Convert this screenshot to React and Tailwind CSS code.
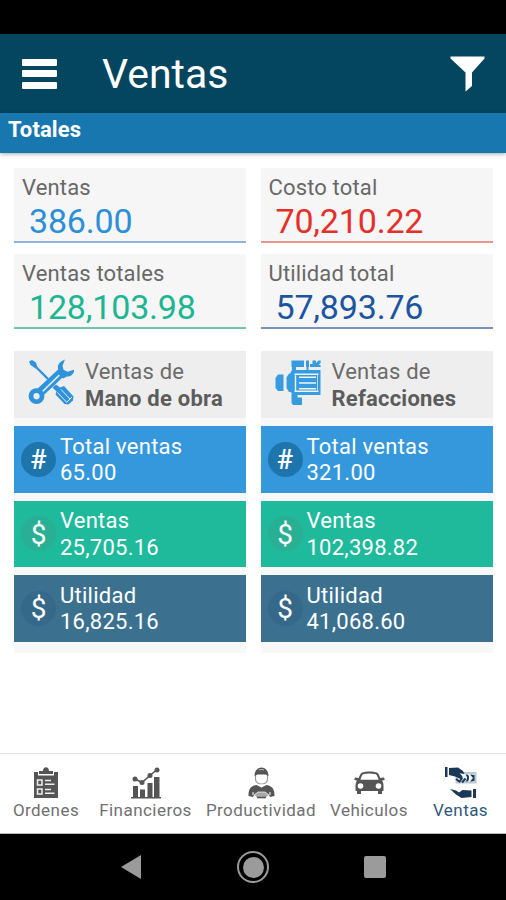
const totals = [
  { label: 'Ventas', value: '386.00', color: 'text-[#2d8fd8]', line: 'border-[#8fb4e4]' },
  { label: 'Costo total', value: '70,210.22', color: 'text-[#e5302a]', line: 'border-[#ef9390]' },
  { label: 'Ventas totales', value: '128,103.98', color: 'text-[#1db592]', line: 'border-[#74c7a6]' },
  { label: 'Utilidad total', value: '57,893.76', color: 'text-[#1c559f]', line: 'border-[#7d90bd]' },
];

function ToolsIcon() {
  return (
    <svg width="46" height="47" viewBox="0 0 46 47" fill="none">
      <path d="M1 2.500 4 1l4 2.500 1.500 5-2 1-5-3.500z" fill="#2f93dc" />
      <path d="M7 7 20 20" stroke="#2f93dc" strokeWidth="2.400" />
      <path d="m24.500 28.500 3.500-3 4 3 4-1.500 9.500 10.500-.5 4-4.500 4-4-.5-9-9.500 1-3z" fill="#2f93dc" />
      <path d="m33 30.500 9 9.500M29.500 33.500l9 9.500M38.500 43.500l5.500-5.500" stroke="#e6eff6" strokeWidth="1" />
      <path d="M12 33.500 35.500 11.500" stroke="#2f93dc" strokeWidth="9" />
      <path d="M14.500 32.500 34.500 13" stroke="#e5eff7" strokeWidth="1.700" />
      <path d="M37 .5c-5.500 2-8.500 6-6.500 10.500L29 14l6 5.500 4-2c3.500.5 7-2.500 7.500-7l-7 2.200-4-2-1-4z" fill="#2f93dc" />
      <circle cx="8.500" cy="37.200" r="5.500" fill="#eee" stroke="#2f93dc" strokeWidth="4.800" />
    </svg>
  );
}

function EngineIcon() {
  return (
    <svg width="47" height="47" viewBox="0 0 47 47" fill="#369cdf">
      <path d="M3 15.500h5.500V32H3L.5 29V19zM14 14.500h2.500V33H14l-2.500-4V18.500z" />
      <path d="M16.500 1.500H29V8H16.500zM31 1.500h3V8h-3zM35 5h2.500V1.500H41V4l2.500-2.500h2.200V4l-2 1.500 2 1V8H35z" />
      <path d="M17 7.500h4V12h-4zM31.500 7.500h2V12h-2zM17 11h28.500v25H18l-2.500-3V13.500z" />
      <path d="M16.500 35h6v3.500H27V46H18l-1.500-2z" />
      <path d="M20.500 16.200v15.300M24 18.200h17M24 24h17M24 29.800h17M19.500 15.300h24M19.500 32.200h24" fill="none" stroke="#eef4f9" strokeWidth="1.400" />
      <path d="M42.500 16v15.500" fill="none" stroke="#b9dbf2" strokeWidth="1" />
    </svg>
  );
}

const groups = [
  { name: 'Mano de obra', Icon: ToolsIcon, values: ['65.00', '25,705.16', '16,825.16'] },
  { name: 'Refacciones', Icon: EngineIcon, values: ['321.00', '102,398.82', '41,068.60'] },
];

const tiles = [
  { label: 'Total ventas', sign: '#', bg: 'bg-[#3598dc]', disc: 'bg-[#1d75ac]', signClass: 'text-[27px] font-medium' },
  { label: 'Ventas', sign: '$', bg: 'bg-[#1fba9b]', disc: 'bg-[#29b094]', signClass: 'text-[28px]' },
  { label: 'Utilidad', sign: '$', bg: 'bg-[#3b718f]', disc: 'bg-[#366989]', signClass: 'text-[28px]' },
];

function Group({ name, Icon, values }) {
  return (
    <section className="flex h-[302px] w-[232px] flex-col gap-2 bg-[#f8f8f8]">
      <div className="flex h-[67px] bg-[#eee] pl-[14px] pt-[8px]">
        <div className="w-[57px] shrink-0">
          <Icon />
        </div>
        <div className="whitespace-nowrap text-[22px] leading-[26.500px] text-[#6b6b6b]">
          <div className="tracking-[0.200px]">Ventas de</div>
          <div className="font-bold tracking-[0.220px] text-[#5c5c5c]">{name}</div>
        </div>
      </div>
      {tiles.map((t, i) => (
        <div key={t.label} className={`flex h-[66.500px] items-center pl-[7px] text-white ${t.bg}`}>
          <div className={`flex h-[35px] w-[35px] items-center justify-center rounded-full pt-[2px] leading-none ${t.disc} ${t.signClass}`}>
            {t.sign}
          </div>
          <div className="ml-[4px] pt-[2px] text-[22px] leading-[26.500px] tracking-[0.250px]">
            <div>{t.label}</div>
            <div>{values[i]}</div>
          </div>
        </div>
      ))}
    </section>
  );
}

const OrdersIcon = () => (
  <svg width="26" height="32" viewBox="0 0 26 32" fill="#555">
    <path d="M1 5h4v3.500h16V5h4v26H1z" />
    <path d="M6 7V4h4c0-5 6-5 6 0h4v3z" />
    <g fill="none" stroke="#eee">
      <path d="M4.500 13h4.500v5H4.500zM4.500 22h4.500v5H4.500z" strokeWidth="1.500" />
      <path d="M12 13.500h6M12 17.200h9.500M12 22.500h6M12 26.200h9.500" strokeWidth="1.500" />
    </g>
  </svg>
);

const ChartIcon = () => (
  <svg width="30" height="32" viewBox="0 0 30 32" fill="#555">
    <path d="M2 19h5v11H2zM9 22.500h5V30H9zM16.500 16h5v14h-5zM23 10h5.500v20H23zM0 30h30v1.500H0z" />
    <path d="m4 12 7 3.500 8-7 7-6" fill="none" stroke="#555" strokeWidth="1.600" />
    <circle cx="4" cy="12" r="2.500" />
    <circle cx="11" cy="15.500" r="2.500" />
    <circle cx="19" cy="8.500" r="2.500" />
    <circle cx="26" cy="3" r="2.500" />
  </svg>
);

const WorkerIcon = () => (
  <svg width="27" height="32" viewBox="0 0 27 32" fill="#555">
    <path d="M7.500 8v4.500c1 6 11 6 12 0V8" fill="#fff" stroke="#999" strokeWidth="1.200" />
    <path d="M6.500 9C6.500-2.500 20.500-2.500 20.500 9l-3-1.500h-8z" />
    <path d="M11 3c2-.7 3-.7 5 0" stroke="#ccc" strokeWidth="1" fill="none" />
    <path d="m8.500 18 5 2.500 5-2.500c6 1.200 8 4 8 11l-4.500 1-1-2-3 1.500H9L6 28l-1 2-4.500-1c0-7 2-9.800 8-11z" />
    <path d="m10 17.500 3.500 3 3.500-3" fill="#fff" />
    <path d="M5 25v3M22 25v3" stroke="#fff" strokeWidth="1" fill="none" />
    <path d="m6 28 4-3h7l4 3-4 3.500h-7z" fill="#a8a8a8" stroke="#fff" strokeWidth=".7" />
    <path d="M9 30.500h9" stroke="#555" strokeWidth="1.500" />
  </svg>
);

const CarIcon = () => (
  <svg width="31" height="24" viewBox="0 0 31 24" fill="#555">
    <path fillRule="evenodd" d="M8 1.500c4-1.500 11-1.500 15 0 1.500 1 2.500 3 3.200 5.500l3.800-.5.800 2.200-2.800 1c1 1.200 1.500 3 1.500 5V20h-1.500v3h-4v-3H7v3H3v-3H1.500v-5.300c0-2 .5-3.800 1.500-5l-2.800-1L1 6.500l3.800.5C5.500 4.500 6.500 2.500 8 1.500zM9 3.300C7.800 4.600 7 6.500 6.500 8.800h18C24 6.500 23.200 4.600 22 3.300c-4-1-9-1-13 0z" />
    <circle cx="6.500" cy="15" r="2.800" fill="#fff" />
    <circle cx="24.500" cy="15" r="2.800" fill="#fff" />
  </svg>
);

const SalesIcon = () => (
  <svg width="32" height="32" viewBox="0 0 32 32" fill="#1b3858">
    <path d="M10.500 5h21v11.500h-21z" fill="#b9c7d3" />
    <path d="M13 7h16.500v7.500H13z" fill="#f2f6f9" />
    <path d="M0 0h2.500v10H0zM4 1l9-.5 5 3.500 1.500 3-5-1 3 3.500-2 2.500L10 9.500 4 8z" />
    <path d="m11 12 3.500 2.500 3-4M17 15.500l3.500-4" fill="none" stroke="#1b3858" strokeWidth="2" />
    <path d="M22.500 7.500c2 1 2 5.500 0 7h-2c2-2.500 2-4.500 0-7zM25 7.500l3 3.500-3 3.500 4.500-.5V8z" />
    <path d="m5 22 6 1.500 3 2 3.500-2.500 9 .5V30l-10 1-5.500-3.500zM28 22h3v9h-3z" />
  </svg>
);

const nav = [
  { label: 'Ordenes', Icon: OrdersIcon, w: 'w-[92px]' },
  { label: 'Financieros', Icon: ChartIcon, w: 'w-[107px]' },
  { label: 'Productividad', Icon: WorkerIcon, w: 'w-[124px]' },
  { label: 'Vehiculos', Icon: CarIcon, w: 'w-[92px]' },
  { label: 'Ventas', Icon: SalesIcon, w: 'w-[91px]', active: true },
];

export default function App() {
  return (
    <div className="flex h-[900px] w-[506px] flex-col overflow-hidden bg-white font-['Roboto',sans-serif]">
      <div className="h-[34px] shrink-0 bg-black" />
      <header className="flex h-[79px] shrink-0 items-center bg-[#04455f] pl-[22px] pr-[21px] text-white">
        <div className="flex w-[35px] flex-col gap-[4.500px]">
          <div className="h-[7px] rounded-[1px] bg-white" />
          <div className="h-[7px] rounded-[1px] bg-white" />
          <div className="h-[7px] rounded-[1px] bg-white" />
        </div>
        <h1 className="ml-[45px] flex-1 pt-[1px] text-[41px] leading-[48px]">Ventas</h1>
        <svg width="35" height="36" viewBox="0 0 35 36" fill="#fff">
          <path d="M.5.5h34v2L22 16.500V30l-6.500 5.500v-19L.5 2.500z" />
        </svg>
      </header>
      <div className="z-10 h-[40px] shrink-0 bg-[#1977b0] pl-[8px] pt-[3px] text-[22px] font-bold leading-[27px] tracking-[0.100px] text-white shadow-[0_1px_4px_rgba(0,0,0,0.350)]">
        Totales
      </div>

      <main className="flex-1 px-[14px] pt-[15px]">
        <div className="grid grid-cols-[232px_232px] gap-x-[14.500px] gap-y-[11px]">
          {totals.map((t) => (
            <div key={t.label} className={`h-[75px] border-b-2 bg-[#f6f6f6] pl-[8px] pt-[6px] ${t.line}`}>
              <div className="text-[22px] leading-[28px] tracking-[0.150px] text-[#686868]">{t.label}</div>
              <div className={`-mt-[1px] pl-[7px] text-[34px] leading-[40px] tracking-[-0.180px] ${t.color}`}>{t.value}</div>
            </div>
          ))}
        </div>
        <div className="mt-[22px] grid grid-cols-[232px_232px] gap-x-[14.500px]">
          {groups.map((g) => (
            <Group key={g.name} {...g} />
          ))}
        </div>
      </main>

      <nav className="flex h-[81px] shrink-0 border-b border-t border-b-[#bbb] border-t-[#e4e4e4] bg-white">
        {nav.map(({ label, Icon, w, active }) => (
          <div key={label} className={`flex flex-col items-center pt-[12px] ${w}`}>
            <div className="flex h-[33px] items-center">
              <Icon />
            </div>
            <div className={`text-[17px] leading-[22px] tracking-[0.450px] ${active ? 'text-[#2f5a7c]' : 'text-[#707070]'}`}>
              {label}
            </div>
          </div>
        ))}
      </nav>
      <div className="flex h-[66px] shrink-0 items-center bg-black pl-[120px]">
        <svg width="22" height="26" viewBox="0 0 22 26" fill="#9b9b9b">
          <path d="M1 13 21 1v24z" />
        </svg>
        <div className="ml-[95px] flex h-[32px] w-[32px] items-center justify-center rounded-full border-2 border-[#9b9b9b]">
          <div className="h-[21px] w-[21px] rounded-full bg-[#9b9b9b]" />
        </div>
        <div className="ml-[95px] h-[22px] w-[22px] rounded-[2px] bg-[#9b9b9b]" />
      </div>
    </div>
  );
}
